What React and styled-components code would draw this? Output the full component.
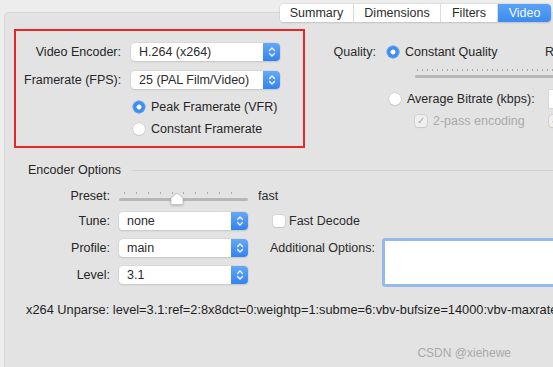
import React from 'react'
import styled, {createGlobalStyle} from 'styled-components'

const GlobalStyle = createGlobalStyle`
  body {
    margin: 0;
    background: #ededed;
    font-family: 'Liberation Sans', Arial, sans-serif;
    font-size: 12px;
    color: #2b2b2b;
  }
`

const tabs = ['Summary', 'Dimensions', 'Filters', 'Video']
const tabWidths = [73, 86, 56, 53]

function Chevrons() {
  return (
    <svg width="8" height="12" viewBox="0 0 8 12">
      <path d="M1.5 4.5 L4 2 L6.5 4.5 M1.5 7.5 L4 10 L6.5 7.5" fill="none" stroke="#fff" strokeWidth="1.3" strokeLinecap="round" strokeLinejoin="round" />
    </svg>
  )
}

function Select({value, width}) {
  return (
    <SelectBox $width={width}>
      <SelectText>{value}</SelectText>
      <SelectArrow>
        <Chevrons />
      </SelectArrow>
    </SelectBox>
  )
}

function Radio({checked}) {
  return <RadioDot $checked={checked} />
}

function Knob() {
  return (
    <KnobWrap>
      <svg width="14" height="13" viewBox="0 0 14 13">
        <path d="M7 1 L13 6 L13 11.5 Q13 12.5 12 12.5 L2 12.5 Q1 12.5 1 11.5 L1 6 Z" fill="#fff" stroke="#bdbdbd" strokeWidth="0.8" />
      </svg>
    </KnobWrap>
  )
}

export default function App() {
  return (
    <>
      <GlobalStyle />
      <Screen>
        <TabBar>
          {tabs.map((t, i) => (
            <Tab key={t} $active={t === 'Video'} $width={tabWidths[i]}>
              {t}
            </Tab>
          ))}
        </TabBar>
        <Panel>
          <TopSection>
            <HighlightBox>
              <FormGrid>
                <Label>Video Encoder:</Label>
                <Select value="H.264 (x264)" />
                <Label>Framerate (FPS):</Label>
                <Select value="25 (PAL Film/Video)" />
                <RadioGroup>
                  <RadioRow>
                    <Radio checked />
                    <span>Peak Framerate (VFR)</span>
                  </RadioRow>
                  <RadioRow>
                    <Radio />
                    <span>Constant Framerate</span>
                  </RadioRow>
                </RadioGroup>
              </FormGrid>
            </HighlightBox>
            <QualityColumn>
              <QualityRow $top={14}>
                <QualityLabel>Quality:</QualityLabel>
                <RadioRow $width={158}>
                  <Radio checked />
                  <span>Constant Quality</span>
                </RadioRow>
                <span>RF:</span>
              </QualityRow>
              <QualityRow $top={6} $left={95} $slim>
                <Track $width={200}>
                  <Ticks $spacing={5} />
                </Track>
              </QualityRow>
              <QualityRow $top={11} $left={67}>
                <RadioRow $width={160}>
                  <Radio />
                  <span>Average Bitrate (kbps):</span>
                </RadioRow>
                <SmallInput />
              </QualityRow>
              <QualityRow $top={4} $left={93}>
                <RadioRow $width={134} $disabled>
                  <CheckBox $disabled>✓</CheckBox>
                  <span>2-pass encoding</span>
                </RadioRow>
                <CheckBox $disabled>✓</CheckBox>
              </QualityRow>
            </QualityColumn>
          </TopSection>

          <SectionHeader>
            <span>Encoder Options</span>
            <Rule />
          </SectionHeader>

          <EncoderGrid>
            <Label>Preset:</Label>
            <SliderCell>
              <Track $width={129}>
                <Ticks $spacing={11.9} $inset={5} />
                <Knob />
              </Track>
            </SliderCell>
            <SideCell>fast</SideCell>

            <Label>Tune:</Label>
            <Select value="none" />
            <SideCell $left={15}>
              <CheckBox />
              <span>Fast Decode</span>
            </SideCell>

            <Label>Profile:</Label>
            <Select value="main" />
            <OptionsCell>
              <OptionsLabel>Additional Options:</OptionsLabel>
              <OptionsArea />
            </OptionsCell>

            <Label>Level:</Label>
            <Select value="3.1" />
          </EncoderGrid>

          <Unparse>
            x264 Unparse: level=3.1:ref=2:8x8dct=0:weightp=1:subme=6:vbv-bufsize=14000:vbv-maxrate
          </Unparse>
        </Panel>
        <Watermark>CSDN @xiehewe</Watermark>
      </Screen>
    </>
  )
}

//styled components

const Screen = styled.div`
  position: relative;
  width: 553px;
  height: 367px;
  overflow: hidden;
  background: #ededed;
  padding: 12px 0 0 4px;
  box-sizing: border-box;
`
const TabBar = styled.div`
  position: absolute;
  top: 4px;
  left: 280px;
  display: flex;
  height: 18px;
  background: #fff;
  border-radius: 4px;
  box-shadow: 0 0 0 0.5px #cfcfcf, 0 1px 1.5px rgba(0, 0, 0, 0.18);
  overflow: hidden;
  z-index: 2;
`
const Tab = styled.div`
  width: ${p => p.$width}px;
  display: flex;
  align-items: center;
  justify-content: center;
  font-size: 12.5px;
  color: ${p => (p.$active ? '#f4f8ff' : '#2d2d2d')};
  background: ${p => (p.$active ? 'linear-gradient(#5aa2f6, #3d8bf1)' : '#fff')};
  border-left: 1px solid #dcdcdc;
  &:first-child {
    border-left: none;
  }
`
const Panel = styled.div`
  width: 620px;
  height: 400px;
  background: #e3e3e3;
  border: 1px solid #d6d6d6;
  border-radius: 5px 0 0 0;
  box-sizing: border-box;
`
const TopSection = styled.div`
  display: flex;
  align-items: flex-start;
  padding: 16px 0 0 9px;
`
const HighlightBox = styled.div`
  width: 291px;
  height: 119px;
  box-sizing: border-box;
  border: 2px solid #e5262a;
`
const FormGrid = styled.div`
  display: grid;
  grid-template-columns: 97px 149px;
  grid-auto-rows: 18px;
  column-gap: 10px;
  row-gap: 10px;
  padding: 12px 0 0 8px;
`
const Label = styled.div`
  text-align: right;
  align-self: center;
  white-space: nowrap;
  font-size: 12.5px;
  color: #262626;
`
const SelectBox = styled.div`
  width: ${p => (p.$width ? `${p.$width}px` : '100%')};
  height: 18px;
  display: flex;
  background: #fff;
  border-radius: 4px;
  box-shadow: 0 0 0 0.5px #cdcdcd, 0 1px 1.5px rgba(0, 0, 0, 0.15);
  overflow: hidden;
`
const SelectText = styled.div`
  flex: 1;
  display: flex;
  align-items: center;
  padding-left: 8px;
  font-size: 12.5px;
  color: #2c2c2c;
  white-space: nowrap;
`
const SelectArrow = styled.div`
  width: 17px;
  display: flex;
  align-items: center;
  justify-content: center;
  background: linear-gradient(#64a8f7, #3382ef);
`
const RadioGroup = styled.div`
  grid-column: 2;
  grid-row: 3 / span 2;
  display: flex;
  flex-direction: column;
  gap: 6px;
`
const RadioRow = styled.div`
  display: flex;
  align-items: center;
  gap: 6px;
  height: 16px;
  width: ${p => (p.$width ? `${p.$width}px` : 'auto')};
  margin-left: 2px;
  font-size: 12.5px;
  white-space: nowrap;
  color: ${p => (p.$disabled ? '#ababab' : '#262626')};
`
const RadioDot = styled.span`
  width: 12px;
  height: 12px;
  flex: none;
  border-radius: 50%;
  box-sizing: border-box;
  background: ${p =>
    p.$checked
      ? 'radial-gradient(circle, #fff 0 2.2px, #3f8ef3 2.8px)'
      : '#fff'};
  box-shadow: ${p =>
    p.$checked ? '0 0 0 0.5px #3b82e8' : '0 0 0 0.5px #c4c4c4, 0 1px 1px rgba(0,0,0,0.12)'};
`
const QualityColumn = styled.div`
  display: flex;
  flex-direction: column;
  margin-left: 15px;
`
const QualityRow = styled.div`
  display: flex;
  align-items: center;
  height: ${p => (p.$slim ? '12px' : '18px')};
  margin-top: ${p => p.$top}px;
  margin-left: ${p => p.$left || 0}px;
  font-size: 12.5px;
  white-space: nowrap;
`
const QualityLabel = styled.span`
  width: 56px;
  margin-right: 9px;
  text-align: right;
`
const SmallInput = styled.div`
  width: 40px;
  height: 18px;
  background: #fff;
  box-shadow: 0 0 0 0.5px #cccccc;
`
const CheckBox = styled.span`
  width: 12px;
  height: 12px;
  flex: none;
  display: flex;
  align-items: center;
  justify-content: center;
  font-size: 10px;
  line-height: 1;
  color: ${p => (p.$disabled ? '#a9a9a9' : 'transparent')};
  background: ${p => (p.$disabled ? '#efefef' : '#fff')};
  border-radius: 3px;
  box-shadow: 0 0 0 0.5px #c3c3c3, 0 1px 1px rgba(0, 0, 0, 0.1);
`
const Track = styled.div`
  position: relative;
  width: ${p => p.$width}px;
  height: 3px;
  margin-top: 6px;
  background: #b7b7b7;
  border-radius: 2px;
`
const Ticks = styled.div`
  position: absolute;
  left: ${p => p.$inset || 2}px;
  right: ${p => p.$inset || 0}px;
  top: -6px;
  height: 2px;
  background: repeating-linear-gradient(
    to right,
    #a9a9a9 0 1px,
    transparent 1px ${p => p.$spacing}px
  );
`
const KnobWrap = styled.div`
  position: absolute;
  left: 51px;
  top: -6px;
  filter: drop-shadow(0 1px 1px rgba(0, 0, 0, 0.2));
`
const SectionHeader = styled.div`
  display: flex;
  align-items: center;
  height: 16px;
  margin-top: 14px;
  padding-left: 23px;
  font-size: 12.5px;
  color: #262626;
`
const Rule = styled.div`
  flex: 1;
  height: 1px;
  margin-left: 11px;
  background: #d2d2d2;
`
const EncoderGrid = styled.div`
  display: grid;
  grid-template-columns: 85px 129px 1fr;
  grid-template-rows: 14px 18px 18px 18px;
  column-gap: 9px;
  row-gap: 9px;
  margin-top: 11px;
  padding-left: 20px;
`
const SliderCell = styled.div`
  display: flex;
  align-items: center;
`
const SideCell = styled.div`
  display: flex;
  align-items: center;
  gap: 4px;
  margin-left: ${p => (p.$left || 0) + 1}px;
  font-size: 12.5px;
  white-space: nowrap;
`
const OptionsCell = styled.div`
  grid-column: 3;
  grid-row: 3 / span 2;
  display: flex;
  align-items: flex-start;
  gap: 7px;
  margin-left: 13px;
`
const OptionsLabel = styled.div`
  line-height: 18px;
  font-size: 12.5px;
  white-space: nowrap;
`
const OptionsArea = styled.div`
  width: 220px;
  height: 49px;
  margin-top: -1px;
  box-sizing: border-box;
  background: #fff;
  border: 3px solid #95b9e8;
  border-radius: 3px;
`
const Unparse = styled.div`
  margin-top: 18px;
  padding-left: 21px;
  line-height: 16px;
  font-size: 12.8px;
  color: #1f1f1f;
  white-space: nowrap;
`
const Watermark = styled.div`
  position: absolute;
  right: 42px;
  bottom: 7px;
  font-size: 12px;
  color: #a9a9a9;
`
